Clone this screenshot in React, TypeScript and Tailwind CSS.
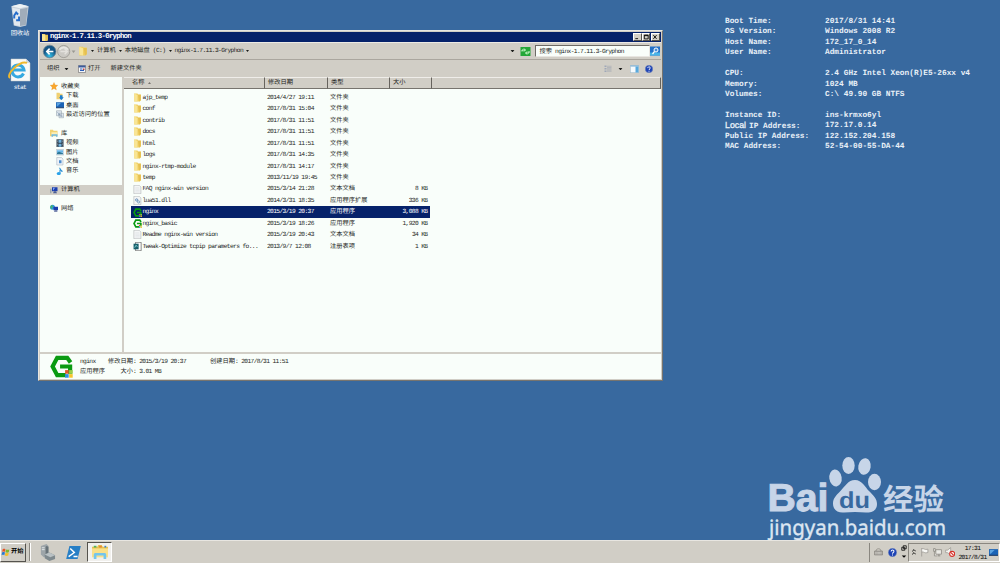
import type { ReactNode } from 'react';
import clsx from 'clsx';

type IconName =
  | 'folder' | 'text' | 'dll' | 'nginx' | 'reg' | 'star' | 'download' | 'desktop' | 'recent'
  | 'library' | 'video' | 'image' | 'doc' | 'music' | 'computer' | 'network';

interface FileItem {
  icon: IconName;
  name: string;
  date: string;
  type: string;
  size?: string;
}

const files: FileItem[] = [
  { icon: 'folder', name: 'ajp_temp', date: '2014/4/27 19:11', type: '文件夹' },
  { icon: 'folder', name: 'conf', date: '2017/8/31 15:04', type: '文件夹' },
  { icon: 'folder', name: 'contrib', date: '2017/8/31 11:51', type: '文件夹' },
  { icon: 'folder', name: 'docs', date: '2017/8/31 11:51', type: '文件夹' },
  { icon: 'folder', name: 'html', date: '2017/8/31 11:51', type: '文件夹' },
  { icon: 'folder', name: 'logs', date: '2017/8/31 14:35', type: '文件夹' },
  { icon: 'folder', name: 'nginx-rtmp-module', date: '2017/8/31 14:17', type: '文件夹' },
  { icon: 'folder', name: 'temp', date: '2013/11/19 19:45', type: '文件夹' },
  { icon: 'text', name: 'FAQ nginx-win version', date: '2015/3/14 21:28', type: '文本文档', size: '8 KB' },
  { icon: 'dll', name: 'lua51.dll', date: '2014/3/31 18:35', type: '应用程序扩展', size: '336 KB' },
  { icon: 'nginx', name: 'nginx', date: '2015/3/19 20:37', type: '应用程序', size: '3,088 KB' },
  { icon: 'nginx', name: 'nginx_basic', date: '2015/3/19 18:26', type: '应用程序', size: '1,920 KB' },
  { icon: 'text', name: 'Readme nginx-win version', date: '2015/3/19 20:43', type: '文本文档', size: '34 KB' },
  { icon: 'reg', name: 'Tweak-Optimize tcpip parameters fo...', date: '2013/9/7 12:08', type: '注册表项', size: '1 KB' },
];

const navGroups: { icon: IconName; label: string; active?: boolean; items: { icon: IconName; label: string }[] }[] = [
  {
    icon: 'star',
    label: '收藏夹',
    items: [
      { icon: 'download', label: '下载' },
      { icon: 'desktop', label: '桌面' },
      { icon: 'recent', label: '最近访问的位置' },
    ],
  },
  {
    icon: 'library',
    label: '库',
    items: [
      { icon: 'video', label: '视频' },
      { icon: 'image', label: '图片' },
      { icon: 'doc', label: '文档' },
      { icon: 'music', label: '音乐' },
    ],
  },
  { icon: 'computer', label: '计算机', active: true, items: [] },
  { icon: 'network', label: '网络', items: [] },
];

const hostInfo = [
  [
    ['Boot Time:', '2017/8/31 14:41'],
    ['OS Version:', 'Windows 2008 R2'],
    ['Host Name:', '172_17_0_14'],
    ['User Name:', 'Administrator'],
  ],
  [
    ['CPU:', '2.4 GHz Intel Xeon(R)E5-26xx v4'],
    ['Memory:', '1024 MB'],
    ['Volumes:', 'C:\\ 49.90 GB NTFS'],
  ],
  [
    ['Instance ID:', 'ins-krmxo6yl'],
    ['Local IP Address:', '172.17.0.14'],
    ['Public IP Address:', '122.152.204.158'],
    ['MAC Address:', '52-54-00-55-DA-44'],
  ],
];

// Latin glyphs take exactly half the width of a CJK one
function T({ children }: { children: string }) {
  return (
    <span className="whitespace-pre">
      {children.split(/([\u3000-\u9fff]+)/).map((part, i) =>
        i % 2 ? (
          <span key={i}>{part}</span>
        ) : (
          <span key={i} className="font-['Liberation_Mono',monospace] tracking-[-0.1em]">
            {part}
          </span>
        ),
      )}
    </span>
  );
}

function NginxLogo() {
  return (
    <>
      <path d="M14.300 5.200 12 2H5L1.800 8 5 14h6M7 8h7v5" fill="none" stroke="#0a9a12" strokeWidth="2.900" />
      <path d="M10.500 10.500h2.500v2.500h-2.500z" fill="#e2592c" />
      <path d="M13.300 10.500h2.500v2.500h-2.500z" fill="#9bd04a" />
      <path d="M10.500 13.300h2.500v2.500h-2.500z" fill="#2f8fe0" />
      <path d="M13.300 13.300h2.500v2.500h-2.500z" fill="#f7c52b" />
    </>
  );
}

const glyphs: Record<IconName, ReactNode> = {
  folder: (
    <>
      <path d="M2 1h6l1 1.500h5V13l-2 2H2z" fill="#f0cf63" />
      <path d="M9 3h5v10l-3 2z" fill="#e5c050" />
      <path d="M2 1l6 2.500V15l-6-1z" fill="#f8e596" />
    </>
  ),
  text: (
    <>
      <path d="M1.500.5h9.500l3 3v12H1.500z" fill="#f4f6f6" stroke="#a9adb0" />
      <path d="M4 5h7M4 7.500h8M4 10h8M4 12.500h8" stroke="#d9dde0" />
    </>
  ),
  dll: (
    <>
      <path d="M1.500.5h9.500l3 3v12H1.500z" fill="#f4f6f6" stroke="#a9adb0" />
      <circle cx="6.500" cy="7" r="2" fill="none" stroke="#5a86b4" strokeWidth="1.600" />
      <circle cx="10" cy="10.500" r="2" fill="none" stroke="#7399bd" strokeWidth="1.600" />
    </>
  ),
  nginx: <NginxLogo />,
  reg: (
    <>
      <path d="M4.500.5h10v15h-10z" fill="#fff" stroke="#333" />
      <path d="M1 3h9v10H1z" fill="#175f6a" />
      <path d="M3 10l2-4 3 2" fill="none" stroke="#8de0e0" strokeWidth="1.500" />
    </>
  ),
  star: <path d="m8 .5 2.200 5 5.300.6-4 3.700 1.200 5.400L8 12.500l-4.700 2.700 1.200-5.400-4-3.700 5.300-.6z" fill="#f9a72b" stroke="#e58413" strokeWidth=".6" />,
  download: (
    <>
      <path d="M1 1h6l1 2h5v11H1z" fill="#f0d070" />
      <path d="M8 6h5v4h2.500L10.500 16 6 10h2z" fill="#1d7fd0" />
    </>
  ),
  desktop: (
    <>
      <path d="M0 2h16v11H0z" fill="#1b64b6" />
      <path d="M1.500 3.500H10L3 10H1.500z" fill="#5ba3e0" />
      <path d="M0 12h16v2H0z" fill="#223f6a" />
    </>
  ),
  recent: (
    <>
      <path d="M1 1h10v10H1zM6 6h9v9H6z" fill="#dfe7ee" stroke="#8d9aa6" />
      <path d="m3 4 6 6M4 9h5M9 12h4" stroke="#6f8ba5" strokeWidth="1.300" />
    </>
  ),
  library: (
    <>
      <path d="M0 1h6l1 2h8v11H0z" fill="#f1d272" />
      <path d="M3 6h11v6H3z" fill="#fbefb7" />
      <path d="M3 15v-5h12v5h-3v-2H6v2z" fill="#6db9e2" />
    </>
  ),
  video: (
    <>
      <path d="M1 0h14v16H1z" fill="#2b3c4b" />
      <path d="M5 1h6v6H5zM5 9h6v6H5z" fill="#70b2dc" />
      <path d="M3 1v14M13 1v14" stroke="#dbe5ec" strokeDasharray="1.500 1.500" />
    </>
  ),
  image: (
    <>
      <path d="M.5 2.500h15v11H.5z" fill="#e9f3fa" stroke="#97a9b8" />
      <path d="M2 4h12v5H2z" fill="#69b7e8" />
      <path d="M2 12V9l4-2 8 3v2z" fill="#2c7796" />
    </>
  ),
  doc: (
    <>
      <path d="M1.500.5h9.500l3 3v12H1.500z" fill="#eef3f8" stroke="#9fabb6" />
      <path d="M6 6h5v6H6z" fill="#4d8dcd" />
    </>
  ),
  music: (
    <>
      <path d="M7 1c1 4 5 3 5 8-.5-2-2-3-4-3v6" fill="#2a9ce2" stroke="#1c86cf" strokeWidth="1.800" />
      <ellipse cx="5.500" cy="12.500" rx="4" ry="3.200" fill="#2aa3ea" />
    </>
  ),
  computer: (
    <>
      <path d="M0 5h3v9H0z" fill="#9aa5ae" />
      <path d="M4 2h11v8H4z" fill="#1c3fae" />
      <path d="M6 3h4L7 8H6z" fill="#7ea4f0" />
      <path d="M8 10h4l2 4H6z" fill="#4b5e94" />
    </>
  ),
  network: (
    <>
      <circle cx="5" cy="6" r="5" fill="#2d9ad2" />
      <path d="M3 2c3 0 3 3 1 4s-2 3 0 4c-3 0-4-5-1-8z" fill="#50b851" />
      <path d="M7 5h9v7H7z" fill="#1b3cac" />
      <path d="M9 12h5l1 3H8z" fill="#56669a" />
    </>
  ),
};

function Icon({ name, className }: { name: IconName; className?: string }) {
  return (
    <svg viewBox="0 0 16 16" className={clsx('shrink-0', className)}>
      {glyphs[name]}
    </svg>
  );
}

function Caret({ className }: { className?: string }) {
  return (
    <svg viewBox="0 0 6 4" className={clsx('shrink-0', className)}>
      <path d="M0 0h6L3 4z" fill="currentColor" />
    </svg>
  );
}

function HelpIcon({ className }: { className?: string }) {
  return (
    <svg viewBox="0 0 16 16" className={clsx('shrink-0', className)}>
      <circle cx="8" cy="8" r="7.500" fill="#1d43b5" stroke="#8293bd" />
      <path d="M5.500 6.200C5.500 2.800 10.700 3 10.500 6c0 1.800-2.400 1.800-2.400 4M8 11.500v2" fill="none" stroke="#fff" strokeWidth="1.800" />
    </svg>
  );
}

function TitleBar() {
  return (
    <div className="flex h-[10px] items-center bg-[#06226a] pl-px text-[7.36px] font-bold text-white">
      <Icon name="folder" className="mr-px h-[9px] w-2" />
      <T>nginx-1.7.11.3-Gryphon</T>
      <div className="ml-auto flex pr-px">
        {['M2 8.500h5', 'M2 2h7v7H2zM2 3h7', 'm2 2 6 7M8 2 2 9'].map((d, i) => (
          <div
            key={d}
            className={clsx('h-2 w-[8.500px] border border-t-white border-r-[#55534e] border-b-[#55534e] border-l-white bg-[#d4d0c8]', i === 2 && 'ml-px')}
          >
            <svg viewBox="0 0 11 11" className="h-full w-full">
              <path d={d} fill="none" stroke="#000" strokeWidth="1.600" />
            </svg>
          </div>
        ))}
      </div>
    </div>
  );
}

function AddressBar() {
  return (
    <div className="flex h-[18px] items-center border-t border-b border-t-[#eceae5] border-b-[#aaa69e] pl-[2px]">
      <svg viewBox="0 0 36 16" className="h-[15px] w-[34px] shrink-0">
        <defs>
          <radialGradient id="back" cy=".85">
            <stop offset="0" stopColor="#33c0e8" />
            <stop offset="1" stopColor="#155585" />
          </radialGradient>
        </defs>
        <circle cx="8" cy="8" r="6.800" fill="url(#back)" stroke="#718591" strokeWidth=".8" />
        <path d="M12 8H5m3-3L5 8l3 3" fill="none" stroke="#fff" strokeWidth="1.700" />
        <circle cx="23" cy="8" r="6.500" fill="#cbc9c4" stroke="#96938d" strokeWidth=".8" />
        <path d="M18.500 6c2-3 7-3 9 0" fill="none" stroke="#e9e7e3" strokeWidth="2" />
        <path d="M19.500 8H27m-3-3 3 3-3 3" fill="none" stroke="#e3e1dd" strokeWidth="1.500" />
        <path d="M31.500 7h4l-2 2.500z" fill="#9a9892" />
      </svg>
      <div className="ml-px flex h-[14px] flex-1 items-center">
        <Icon name="folder" className="ml-px h-[10px] w-[10px]" />
        <Caret className="mr-[3px] ml-[3px] h-[2px] w-[3px]" />
        <T>计算机</T>
        <Caret className="mr-[3px] ml-[3px] h-[2px] w-[3px]" />
        <T>本地磁盘 (C:)</T>
        <Caret className="mr-[2.500px] ml-[3.500px] h-[2px] w-[3px]" />
        <T>nginx-1.7.11.3-Gryphon</T>
        <Caret className="ml-[3px] h-[2px] w-[3px]" />
        <Caret className="mr-[5px] ml-auto h-[2.500px] w-[5px]" />
      </div>
      <svg viewBox="0 0 20 18" className="mr-1 h-[9px] w-[11px] shrink-0">
        <path d="M0 0h20v18H0z" fill="#23a637" />
        <path d="M3 9V6h6m-2-3 3 3-3 3M17 8v4h-6m2-3-3 3 3 3" fill="none" stroke="#d8ffd5" strokeWidth="2" />
      </svg>
      <div className="flex h-3 w-[115px] shrink-0 items-center border border-t-[#6e6b66] border-r-[#e8e6e1] border-b-[#e8e6e1] border-l-[#6e6b66] bg-[#f9fefa] pt-px pl-1">
        <T>搜索 nginx-1.7.11.3-Gryphon</T>
      </div>
      <svg viewBox="0 0 20 18" className="mr-px h-[10px] w-[10px] shrink-0">
        <path d="M0 0h20v18H0z" fill="#2471c8" />
        <path d="M0 12h20v6H0z" fill="#48b4e8" />
        <circle cx="12" cy="7" r="4" fill="#4a8fd9" stroke="#fff" strokeWidth="2" />
        <path d="m9 10-4 5" stroke="#fff" strokeWidth="2.500" />
      </svg>
    </div>
  );
}

function Toolbar() {
  return (
    <div className="flex h-[17px] items-center pt-px pr-2 pl-[7px]">
      <T>组织</T>
      <Caret className="ml-[4.500px] h-[2.500px] w-[5px]" />
      <svg viewBox="0 0 16 16" className="mr-[2.500px] ml-[8.500px] h-2 w-2 shrink-0">
        <path d="M1 1h14v14H1z" fill="#f5f7fa" stroke="#555" />
        <path d="M1 1h14v4H1z" fill="#3c5b9c" />
        <path d="M4 8h5M4 11h8" stroke="#2c5eb8" strokeWidth="2" />
        <path d="M10 7h3v3h-3z" fill="#c23b3b" />
      </svg>
      <T>打开</T>
      <span className="ml-[10px]">
        <T>新建文件夹</T>
      </span>
      <svg viewBox="0 0 16 16" className="ml-auto h-2 w-2 shrink-0">
        <path d="M1 1h4v3H1zM1 6h4v3H1zM1 11h4v3H1z" fill="#9fa7b8" />
        <path d="M6 2.500h9M6 5h9M6 7.500h9M6 10h9M6 12.500h9" stroke="#969eae" />
      </svg>
      <Caret className="ml-[6px] h-[2.500px] w-[5px]" />
      <svg viewBox="0 0 18 16" className="ml-[7px] h-2 w-[9px] shrink-0">
        <path d="M.5.5h17v15H.5z" fill="#f5fafd" stroke="#7ba0bb" />
        <path d="M1 1h16v2H1z" fill="#70a9cf" />
        <path d="M11 3h6v12h-6z" fill="#58a9dc" />
      </svg>
      <HelpIcon className="ml-[6px] h-2 w-2" />
    </div>
  );
}

function NavPane() {
  return (
    <div className="flex w-[82px] shrink-0 flex-col gap-[9.300px] pt-[4.600px]">
      {navGroups.map((group) => (
        <div key={group.label}>
          <div className={clsx('flex h-[9.450px] items-center gap-[3px] pl-[10px]', group.active && 'bg-[#d1cec6]')}>
            <Icon name={group.icon} className="h-[8.500px] w-2" />
            <T>{group.label}</T>
          </div>
          {group.items.map((item) => (
            <div key={item.label} className="flex h-[9.450px] items-center gap-[2px] pl-4">
              <Icon name={item.icon} className="h-[8.500px] w-2" />
              <T>{item.label}</T>
            </div>
          ))}
        </div>
      ))}
    </div>
  );
}

function HeaderCell({ className, children }: { className: string; children?: ReactNode }) {
  return (
    <div className={clsx('flex h-full shrink-0 items-center border-t border-r border-b border-t-[#efede9] border-r-[#66635d] border-b-[#77746e]', className)}>
      {children}
    </div>
  );
}

function FileList() {
  return (
    <div className="flex-1">
      <div className="flex h-[11.500px] bg-[#d1cec6]">
        <HeaderCell className="w-[141px] pl-2">
          <T>名称</T>
          <Caret className="ml-[3px] h-[2px] w-[3px] rotate-180 text-[#77746e]" />
        </HeaderCell>
        <HeaderCell className="w-[63px] pl-[3px]"><T>修改日期</T></HeaderCell>
        <HeaderCell className="w-[62px] pl-[3px]"><T>类型</T></HeaderCell>
        <HeaderCell className="w-[42px] pl-[3px]"><T>大小</T></HeaderCell>
        <HeaderCell className="flex-1" />
      </div>
      <div className="pt-[3.100px] pl-[6.500px]">
        {files.map((file) => (
          <div
            key={file.name}
            className={clsx('flex h-[11.480px] w-[299.500px] items-center pl-[2px]', file.name === 'nginx' ? 'bg-[#06226a] text-white' : 'text-[#1c1e1c]')}
          >
            <Icon name={file.icon} className="mr-px h-[9px] w-[9px]" />
            <span className="w-[124.500px] shrink-0"><T>{file.name}</T></span>
            <span className="w-[63px] shrink-0"><T>{file.date}</T></span>
            <span className="w-[50px] shrink-0"><T>{file.type}</T></span>
            <span className="ml-auto pr-[2.500px]">{file.size && <T>{file.size}</T>}</span>
          </div>
        ))}
      </div>
    </div>
  );
}

function DetailsPane() {
  return (
    <div className="flex h-[27.500px] items-center border-t-2 border-[#d1cec6] bg-[#f9fefa] pl-[10px]">
      <Icon name="nginx" className="mt-px h-[23px] w-[23px]" />
      <div className="ml-[7px] flex flex-col gap-[3.500px] leading-[6px]">
        <div className="flex">
          <span className="w-[28px]"><T>nginx</T></span>
          <span className="w-[102px]"><T>修改日期: 2015/3/19 20:37</T></span>
          <T>创建日期: 2017/8/31 11:51</T>
        </div>
        <div className="flex">
          <span className="w-[40.500px]"><T>应用程序</T></span>
          <T>大小: 3.01 MB</T>
        </div>
      </div>
    </div>
  );
}

function ExplorerWindow() {
  return (
    <div className="absolute top-[30px] left-[38px] flex h-[351px] w-[624.500px] flex-col border border-t-[#e8e6e1] border-r-[#77746e] border-b-[#77746e] border-l-[#e8e6e1] bg-[#d1cec6] p-px">
      <TitleBar />
      <AddressBar />
      <Toolbar />
      <div className="flex min-h-0 flex-1 bg-[#f9fefa]">
        <NavPane />
        <div className="w-[2px] shrink-0 bg-[#d1cec6]" />
        <FileList />
      </div>
      <DetailsPane />
    </div>
  );
}

function DesktopIcons() {
  return (
    <div className="absolute top-[3px] left-0 flex w-10 flex-col items-center text-white">
      <svg viewBox="0 0 22 26" className="h-[25px] w-[22px]">
        <path d="M2 3.500 11 1l9 2.500-2.500 20L11 25l-6.500-1.500z" fill="#c9d3dc" />
        <path d="m2 3.500 9 2 9-2-9-2.500z" fill="#edf2f5" />
        <path d="m3 5 8 1.500V24l-6-1z" fill="#e2e8ee" />
        <path d="m11 6.500 8-1.500-2 18-6 1z" fill="#a0adba" />
        <path d="M5 16v-3l2-3 2 2M10 14v4H7" fill="none" stroke="#246cca" strokeWidth="2" />
      </svg>
      <span className="mt-px leading-[8px]"><T>回收站</T></span>
      <svg viewBox="0 0 24 24" className="mt-[20px] h-6 w-6">
        <path d="M3 1h15l4 4v18H3z" fill="#f8f9f8" stroke="#c4c9cb" strokeWidth=".5" />
        <path d="M18 1v4h4" fill="#d3d9dc" />
        <path d="M15.500 15.500A6 6 0 1 1 16 12H5" fill="none" stroke="#35a8e0" strokeWidth="3" />
        <path d="M2 20c-5-3 10-18 17-15" fill="none" stroke="#efb82c" strokeWidth="1.800" />
      </svg>
      <span className="mt-px leading-[8px]"><T>stat</T></span>
    </div>
  );
}

function HostLabel({ label }: { label: string }) {
  if (!label.startsWith('Local ')) return <>{label}</>;
  return (
    <>
      <span className="inline-block w-[24px] font-['Liberation_Sans',sans-serif] text-[8.800px] leading-none font-normal [-webkit-text-stroke:0.3px]">Local</span>
      {label.slice(6)}
    </>
  );
}

function HostInfo() {
  return (
    <div className="absolute top-[17px] left-[725px] flex flex-col gap-[10.450px] font-['Liberation_Mono',monospace] text-[7.800px] leading-[10.450px] font-bold text-[#e8f0f8]">
      {hostInfo.map((group, i) => (
        <div key={i}>
          {group.map(([label, value]) => (
            <div key={label} className="flex h-[10.450px] items-center whitespace-pre">
              <span className="w-[100px] shrink-0"><HostLabel label={label} /></span>
              <span>{value}</span>
            </div>
          ))}
        </div>
      ))}
    </div>
  );
}

function Watermark() {
  return (
    <svg viewBox="0 0 190 92" className="absolute top-[450px] left-[760px] h-[92px] w-[190px]" fill="#c7d5e8">
      <text x="7.500" y="61" fontSize="39" fontWeight="700" stroke="#c7d5e8" strokeWidth="1" textLength="61" lengthAdjust="spacingAndGlyphs" className="font-['Liberation_Sans',sans-serif]">Bai</text>
      <ellipse cx="75.500" cy="28" rx="6.200" ry="8.500" transform="rotate(-8 75.500 28)" />
      <ellipse cx="88.500" cy="15.500" rx="6.200" ry="8.500" />
      <ellipse cx="104.500" cy="16.500" rx="6.200" ry="8.300" transform="rotate(10 104.500 16.500)" />
      <ellipse cx="114.500" cy="32" rx="6.500" ry="8.200" />
      <path d="M95 30c7 0 10 7 14 11 5 5 8 8 8 13 0 7-6 9-11 8.500-7-.8-15-.8-22 0-6 .6-11-2.500-11-9 0-5 3-8 7-12 5-5 8-11.500 15-11.500z" />
      <text x="79" y="58" fontSize="23" fontWeight="700" fill="#38699f" textLength="31" lengthAdjust="spacingAndGlyphs" className="font-['Liberation_Sans',sans-serif]">du</text>
      <text x="123" y="59.500" fontSize="30" fontWeight="700" textLength="61" lengthAdjust="spacingAndGlyphs" className="font-['Noto_Sans_CJK_SC',sans-serif]">经验</text>
      <text x="9" y="85" fontSize="21" fill="#dce6f1" stroke="#dce6f1" strokeWidth=".4" textLength="177" lengthAdjust="spacingAndGlyphs" className="font-['Noto_Sans',sans-serif]">jingyan.baidu.com</text>
    </svg>
  );
}

function Taskbar() {
  return (
    <div className="absolute inset-x-0 bottom-0 flex h-[23px] items-center border-t border-[#e8e6e1] bg-[#d1cec6] text-black">
      <div className="flex h-[19px] w-[26px] items-center border border-t-white border-r-[#55534e] border-b-[#55534e] border-l-white font-bold">
        <svg viewBox="0 0 18 16" className="h-[9px] w-[10px] shrink-0">
          <path d="M3 2c2-1 3-1 5 0L7 7C5 6 4 6 2 7z" fill="#e65327" />
          <path d="M9 2.500c2 1 4 1 6 0l-1 5c-2 1-4 1-6 0z" fill="#7cb82f" />
          <path d="M2 8c2-1 3-1 5 0l-1 5c-2-1-3-1-5 0z" fill="#2878d0" />
          <path d="M8 8.500c2 1 4 1 6 0l-1 5c-2 1-4 1-6 0z" fill="#f6bd27" />
        </svg>
        <T>开始</T>
      </div>
      <div className="ml-[3px] h-[18px] w-[2px] border-r border-l border-r-white border-l-[#8a8780]" />
      <svg viewBox="0 0 18 18" className="ml-2 h-[17px] w-[17px]">
        <path d="m2 2 6-2 2 2v10l-5 2-3-3z" fill="#9da5a9" />
        <path d="m8 2 2 1v9l-3 1V3z" fill="#687379" />
        <path d="M3 4h3M3 6h3" stroke="#e4e9eb" />
        <path d="m6 11 5-2 6 3v4l-6 2-5-3z" fill="#7e898e" />
        <path d="m6 11 5-2 6 3-5 2z" fill="#b9c1c4" />
      </svg>
      <svg viewBox="0 0 18 16" className="ml-[10px] h-[13px] w-[15px]">
        <path d="M4 0h14l-4 16H0z" fill="#277fc6" />
        <path d="m5 3 5 5-7 5M9 13h5" fill="none" stroke="#fff" strokeWidth="1.800" />
      </svg>
      <div className="ml-[6px] flex h-[20px] w-[25px] items-center justify-center border border-t-[#55534e] border-r-white border-b-white border-l-[#55534e] bg-[#f1f0ed]">
        <svg viewBox="0 0 20 18" className="h-4 w-[18px]">
          <path d="M1 3h6l1-2h4l1 2h6v11H1z" fill="#e6c24f" />
          <path d="M3 2h3v2H3z" fill="#54b158" />
          <path d="M9 2h3v2H9z" fill="#e78135" />
          <path d="M15 2h2v2h-2z" fill="#3b83cd" />
          <path d="M1 5h18v10H1z" fill="#f9e08a" />
          <path d="M3 17v-5c0-1.500 1-2 2-2h10c1 0 2 .5 2 2v5h-3v-4H6v4z" fill="#74c5ec" />
        </svg>
      </div>
      <div className="ml-auto flex h-[19px] items-center border-l border-[#8a8780] pl-1">
        <svg viewBox="0 0 18 16" className="h-2 w-[9px]">
          <path d="M4 6c0-6 10-6 10 0" fill="none" stroke="#88857e" strokeWidth="1.500" />
          <path d="M1 6h16v8H1z" fill="#aaa8a2" stroke="#76736d" />
          <path d="M3 9h12M3 11.500h12" stroke="#eceae5" strokeDasharray="1.500 1" />
        </svg>
        <HelpIcon className="ml-[5.500px] h-[9px] w-[9px]" />
        <svg viewBox="0 0 8 20" className="ml-1 h-[15px] w-[6px]">
          <path d="M3 1h4v4H3zM1 3h4v4H1z" fill="#d1cec6" stroke="#000" />
          <path d="M1 14h6l-3 3z" />
        </svg>
      </div>
      <div className="ml-px flex h-[19px] w-[92px] items-center border border-t-[#8a8780] border-r-white border-b-white border-l-[#8a8780] pl-[2.500px]">
        <svg viewBox="0 0 6 10" className="h-[6px] w-1">
          <path d="m0 4 3-3 3 3M0 9l3-3 3 3" fill="none" stroke="#000" strokeWidth="1.500" />
        </svg>
        <svg viewBox="0 0 16 16" className="ml-1 h-[10px] w-[9px]">
          <path d="M3 1v15M3 2c4-1 5 3 11 1v6c-6 2-7-2-11-1" fill="#f8f8f5" stroke="#97948e" strokeWidth="1.300" />
        </svg>
        <svg viewBox="0 0 16 16" className="ml-1 h-[9px] w-[9px]">
          <path d="M5 3h10v8H5zM8 14h5M10.500 11v3M1 1h3v5H1zM2.500 6v8H7" fill="#ebeae5" stroke="#85827c" strokeWidth="1.300" />
        </svg>
        <svg viewBox="0 0 16 16" className="ml-[3px] h-[10px] w-[10px]">
          <path d="M1 5h3l5-4v12L4 9H1z" fill="#f4f4f1" stroke="#918e88" />
          <circle cx="11.500" cy="11" r="4" fill="#fff" stroke="#d62c24" strokeWidth="1.700" />
          <path d="m9 8.500 5 5" stroke="#d62c24" strokeWidth="1.700" />
        </svg>
        <div className="ml-1 flex flex-col items-center pt-px leading-[8px]">
          <T>17:31</T>
          <T>2017/8/31</T>
        </div>
        <Icon name="desktop" className="ml-[2px] h-[9px] w-[9px]" />
      </div>
    </div>
  );
}

export default function App() {
  return (
    <div className="relative h-[563px] w-[1000px] overflow-hidden bg-[#38699f] font-['Noto_Sans_CJK_SC',sans-serif] text-[6.260px] leading-none text-[#1c1e1c] [text-rendering:geometricPrecision]">
      <DesktopIcons />
      <HostInfo />
      <ExplorerWindow />
      <Watermark />
      <Taskbar />
    </div>
  );
}
